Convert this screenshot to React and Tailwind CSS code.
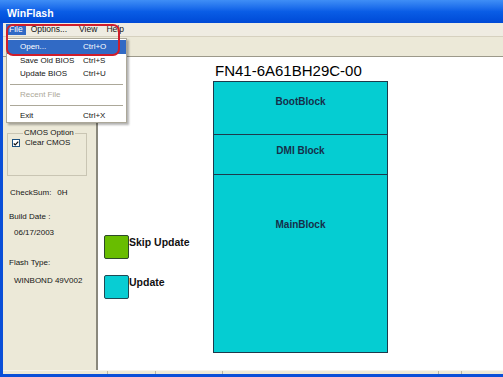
export default function App() {
  const menu = [
    { label: "Save Old BIOS", key: "Ctrl+S", h: "h-[13px]" },
    { label: "Update BIOS", key: "Ctrl+U", h: "h-[13px]" },
  ];

  return (
    <div className="relative h-[377px] w-[503px] overflow-hidden bg-[#0a4fd8] font-['Liberation_Sans',Arial,sans-serif] text-[8px] text-[#151515]">
      {/* title bar */}
      <div className="flex h-[23px] items-center bg-linear-to-b from-[#3f8ef6] via-[#0a5de6] to-[#0049d6] pl-[7px] pt-[4px] text-[10.5px] font-bold text-white">
        WinFlash
      </div>

      <div className="ml-[3px] flex h-[351px] flex-col bg-[#ece9d8]">
        {/* menu bar */}
        <div className="flex h-[14px] items-center border-b border-[#d6d1bf] bg-[#efece2] pl-[3px] text-[8.5px] leading-[11px]">
          <span className="bg-[#316ac5] px-[3px] text-white">File</span>
          <span className="ml-[2px] px-[3px]">Options...</span>
          <span className="ml-[6px] px-[3px]">View</span>
          <span className="ml-[3px] px-[3px]">Help</span>
        </div>

        {/* toolbar */}
        <div className="h-[20px] border-b border-[#9c998a]"></div>

        {/* main */}
        <div className="flex h-[313px]">
          <div className="flex w-[95px] flex-col border-r-2 border-[#8a887c] pl-[4px]">
            <fieldset className="mt-[71px] h-[48px] w-[80px] border border-[#c9c5b3] pl-[4px]">
              <legend className="ml-[11px] px-[1px] leading-[10px]">CMOS Option</legend>
              <div className="flex items-center gap-[5px] leading-[10px]">
                <span className="flex h-[8px] w-[8px] items-center justify-center border border-[#1c5180] bg-white">
                  <svg viewBox="0 0 8 8" className="h-[7px] w-[7px]">
                    <path d="M1 4 L3 6 L7 1.5" fill="none" stroke="#111" strokeWidth="1.6" />
                  </svg>
                </span>
                <span>Clear CMOS</span>
              </div>
            </fieldset>
            <div className="mt-[12px] flex pl-[3px] leading-[10px]">
              <span>CheckSum:</span>
              <span className="ml-[6px]">0H</span>
            </div>
            <div className="mt-[14px] pl-[2px] leading-[10px]">Build Date :</div>
            <div className="mt-[6px] pl-[7px] leading-[10px]">06/17/2003</div>
            <div className="mt-[20px] pl-[2px] leading-[10px]">Flash Type:</div>
            <div className="mt-[8px] pl-[7px] leading-[10px]">WINBOND 49V002</div>
          </div>

          <div className="flex flex-1 bg-white">
            <div className="flex w-[115px] flex-col gap-[16px] pl-[6px] pt-[178px] text-[10.5px] font-bold leading-[12px] text-[#111]">
              <div className="flex items-start">
                <div className="h-[24px] w-[25px] rounded-[2px] border border-[#2d4a2a] bg-[#68bd00]"></div>
                <span className="mt-[1px]">Skip Update</span>
              </div>
              <div className="flex items-start">
                <div className="h-[24px] w-[25px] rounded-[2px] border border-[#1f4a55] bg-[#08cdd3]"></div>
                <span className="mt-[1px]">Update</span>
              </div>
            </div>

            <div className="flex w-[175px] flex-col pt-[5px]">
              <div className="h-[19px] pl-[2px] text-[15px] leading-[18px] text-black">FN41-6A61BH29C-00</div>
              <div className="flex flex-col border border-[#1d3a4c] bg-[#05cdd2] text-center text-[10px] font-bold leading-[12px] text-[#15304a]">
                <div className="h-[53px] border-b border-[#1d3a4c] pt-[14px]">BootBlock</div>
                <div className="h-[40px] border-b border-[#1d3a4c] pt-[10px]">DMI Block</div>
                <div className="h-[177px] pt-[44px]">MainBlock</div>
              </div>
            </div>
          </div>
        </div>

        {/* status bar */}
        <div className="flex h-[4px] border-t border-[#f6f4ec]">
          <div className="ml-[104px] h-full w-px bg-[#b8b5a2]"></div>
          <div className="ml-[47px] h-full w-px bg-[#b8b5a2]"></div>
          <div className="ml-[66px] h-full w-px bg-[#b8b5a2]"></div>
          <div className="ml-[215px] h-full w-px bg-[#b8b5a2]"></div>
          <div className="ml-[22px] h-full w-px bg-[#b8b5a2]"></div>
        </div>
      </div>

      <div className="h-[3px] bg-[#0a4fd8]"></div>

      {/* File dropdown */}
      <div className="absolute left-[6px] top-[38px] w-[121px] border border-[#aca899] bg-white pb-[1px] pt-[1px] shadow-[2px_2px_2px_rgba(0,0,0,0.3)]">
        <div className="flex h-[14px] items-center bg-[#316ac5] pl-[13px] text-white">
          <span className="w-[63px]">Open...</span>
          <span>Ctrl+O</span>
        </div>
        {menu.map((m) => (
          <div key={m.label} className={`flex items-center pl-[13px] ${m.h}`}>
            <span className="w-[63px]">{m.label}</span>
            <span>{m.key}</span>
          </div>
        ))}
        <div className="flex h-[9px] items-center px-[3px]">
          <div className="h-px w-full bg-[#aca899]"></div>
        </div>
        <div className="flex h-[11px] items-center pl-[13px] text-[#aca899]">Recent File</div>
        <div className="flex h-[10px] items-center px-[3px]">
          <div className="h-px w-full bg-[#aca899]"></div>
        </div>
        <div className="flex h-[11px] items-center pl-[13px]">
          <span className="w-[63px]">Exit</span>
          <span>Ctrl+X</span>
        </div>
      </div>

      {/* red annotation */}
      <div className="absolute left-[6px] top-[24px] h-[32px] w-[114px] rounded-[7px] border-2 border-[#cf1d2b]"></div>
    </div>
  );
}
